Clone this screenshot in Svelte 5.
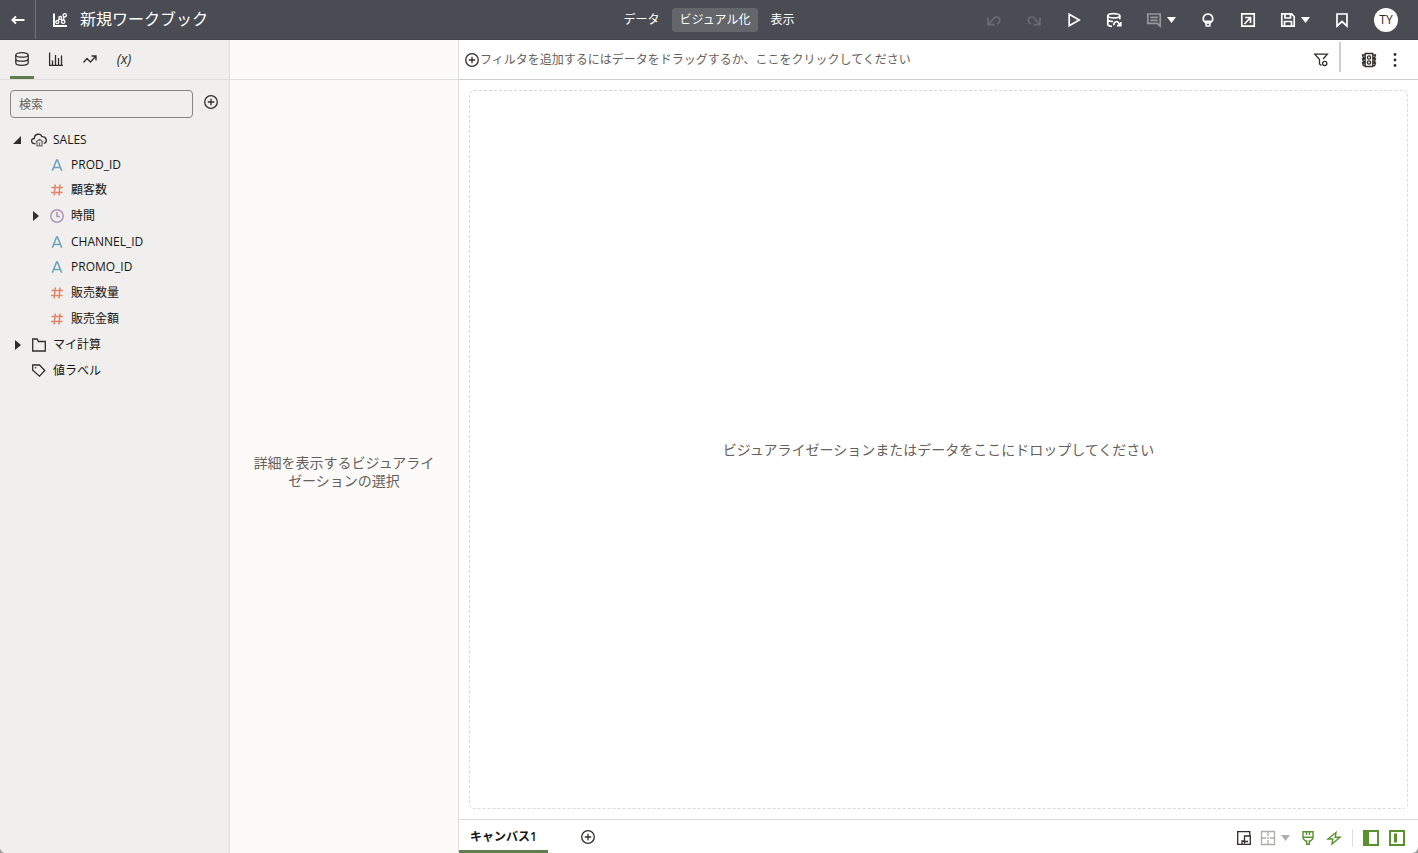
<script lang="ts">
  type Mode = "data" | "visualize" | "present";
  type Kind = "text" | "number" | "time";

  const modes: { id: Mode; label: string }[] = [
    { id: "data", label: "データ" },
    { id: "visualize", label: "ビジュアル化" },
    { id: "present", label: "表示" },
  ];

  const columns: { name: string; kind: Kind; expandable?: boolean }[] = [
    { name: "PROD_ID", kind: "text" },
    { name: "顧客数", kind: "number" },
    { name: "時間", kind: "time", expandable: true },
    { name: "CHANNEL_ID", kind: "text" },
    { name: "PROMO_ID", kind: "text" },
    { name: "販売数量", kind: "number" },
    { name: "販売金額", kind: "number" },
  ];

  const panels = [
    { id: "data", label: "データ" },
    { id: "charts", label: "ビジュアライゼーション" },
    { id: "analytics", label: "アナリティクス" },
    { id: "params", label: "パラメータ" },
  ];

  let mode = $state<Mode>("visualize");
  let panel = $state("data");
  let search = $state("");
  let salesOpen = $state(true);
</script>

{#snippet addIcon()}
  <svg class="icon" viewBox="0 0 16 16" aria-hidden="true">
    <circle cx="8" cy="8" r="6.3" />
    <path d="M8 4.8v6.4M4.8 8h6.4" />
  </svg>
{/snippet}

{#snippet caret()}
  <svg class="caret" viewBox="0 0 9 6" aria-hidden="true"><path d="M0 0h9L4.5 6z" /></svg>
{/snippet}

{#snippet kindIcon(kind: Kind)}
  <svg class="icon {kind}" viewBox="0 0 16 16" aria-hidden="true">
    {#if kind === "text"}
      <path d="M3.3 13.8 7.6 3h.8l4.3 10.800M4.900 10.500h6.200" />
    {:else if kind === "number"}
      <path d="M6.200 2.500 5.200 13.500M11 2.500 10 13.500M2.500 5.500h11.500M2 10.500h11.500" />
    {:else}
      <circle cx="8" cy="8" r="6.2" />
      <path d="M8 4v4.5h3" />
    {/if}
  </svg>
{/snippet}

<div class="app">
  <header class="topbar">
    <div class="start">
      <button class="back" type="button" aria-label="戻る">
        <svg class="icon" viewBox="0 0 16 16"><path class="heavy" d="M14.500 8H2.500M6 4.500 2.500 8 6 11.500" /></svg>
      </button>
      <svg class="icon" viewBox="0 0 16 16" aria-hidden="true">
        <path class="heavy" d="M2 1.500v12.500h13" />
        <path d="M6 8.800 7.300 7M9.300 7l.8.900M11.700 8V5" />
        <circle cx="5.300" cy="10" r="1.500" />
        <circle cx="8.200" cy="5.900" r="1.400" />
        <circle cx="11.200" cy="9.700" r="1.700" />
        <circle cx="12.700" cy="3.300" r="1.700" />
      </svg>
      <h1>新規ワークブック</h1>
    </div>

    <nav class="modes">
      {#each modes as m}
        <button type="button" class:active={mode === m.id} onclick={() => (mode = m.id)}>{m.label}</button>
      {/each}
    </nav>

    <div class="tools">
      <button type="button" disabled aria-label="元に戻す">
        <svg class="icon" viewBox="0 0 16 16"><path class="thick" d="M2 5.500v7.200h6.500M2.500 12.200 7.500 6.500c1.400-1.500 3.700-1.800 5.200-.5 1.800 1.600 1.500 4.200-1.700 6.300" /></svg>
      </button>
      <button type="button" disabled aria-label="やり直し">
        <svg class="icon" viewBox="0 0 16 16"><path class="thick" d="M14 5.500v7.200H7.500M13.500 12.200 8.500 6.500C7.100 5 4.800 4.700 3.300 6c-1.800 1.600-1.500 4.200 1.700 6.300" /></svg>
      </button>
      <button type="button" aria-label="プレビュー">
        <svg class="icon" viewBox="0 0 16 16"><path class="thick" d="M3.200 2.200v11.600L13.200 8z" /></svg>
      </button>
      <button type="button" aria-label="データのリフレッシュ">
        <svg class="icon" viewBox="0 0 16 16">
          <path class="thick" d="M1.800 3.700v8.500c0 1.200 1.800 2 4.200 2.100M13.800 3.700v3.500M1.800 7.800c1 1.500 3.200 1.800 5.200 1.500" />
          <ellipse class="thick" cx="7.800" cy="3.700" rx="6" ry="2.100" />
          <path class="thick" d="M8 13.200c-.8-3 3-4.700 4.600-2.300l1.200 2.400M14.800 10v3.700H11" />
        </svg>
      </button>
      <button class="menu" type="button" aria-label="ノート">
        <svg class="icon dim" viewBox="0 0 16 16"><path class="thick" d="M1.800 2h12.400v12l-3-2.700H1.800zM4.300 5.300h7.500M4.300 8.300h7.500" /></svg>
        {@render caret()}
      </button>
      <button type="button" aria-label="インサイト">
        <svg class="icon" viewBox="0 0 16 16"><path class="thick" d="M5.800 11 3.500 8.500C2.400 5 4.500 2 8 2s5.600 3 4.500 6.500L10.200 11zM4.500 9.300h7M6.200 11v3h3.600v-3" /></svg>
      </button>
      <button type="button" aria-label="エクスポート">
        <svg class="icon" viewBox="0 0 16 16"><path class="thick" d="M1.800 1.800h12.400v12.400H1.800zM5 5.500h5.500V11M10 6l-5.500 6" /></svg>
      </button>
      <button class="menu" type="button" aria-label="保存">
        <svg class="icon" viewBox="0 0 16 16"><path class="thick" d="M1.800 1.800h9.700l2.700 2.700v9.700H1.800zM5 2v4h5.500V2M4.500 14V9.500h7V14" /></svg>
        {@render caret()}
      </button>
      <button type="button" aria-label="ブックマーク">
        <svg class="icon" viewBox="0 0 16 16"><path class="thick" d="M3 2h10v12l-5-4.500L3 14z" /></svg>
      </button>
      <button class="avatar" type="button">TY</button>
    </div>
  </header>

  <div class="body">
    <aside class="data">
      <div class="panels">
        {#each panels as p}
          <button type="button" class:active={panel === p.id} aria-label={p.label} onclick={() => (panel = p.id)}>
            {#if p.id === "params"}
              <i>(x)</i>
            {:else}
              <svg class="icon" viewBox="0 0 16 16">
                {#if p.id === "data"}
                  <ellipse cx="8" cy="3.900" rx="6.200" ry="2.300" />
                  <path d="M1.800 3.900v8.200c0 1.200 2.500 2.200 6.200 2.200s6.200-1 6.200-2.200V3.900M1.800 8c0 1.200 2.500 2.200 6.200 2.200S14.200 9.200 14.200 8" />
                {:else if p.id === "charts"}
                  <path d="M1.600 1.500v12.900H15M4.500 14V9.500M7.500 14V4M10.500 14V7M13.500 14V4.500" />
                {:else}
                  <path d="M1.500 11.500 5 7.500l3.500 3.500 5-5.500M9.500 5h4.500v4.500" />
                {/if}
              </svg>
            {/if}
          </button>
        {/each}
      </div>

      <div class="search">
        <input type="text" placeholder="検索" aria-label="検索" bind:value={search} />
        <button type="button" aria-label="データの追加">{@render addIcon()}</button>
      </div>

      <ul class="tree">
        <li>
          <button class="row latin" type="button" onclick={() => (salesOpen = !salesOpen)}>
            <svg class="twisty" viewBox="0 0 10 10"><path d={salesOpen ? "M9 1v8H1z" : "M3 0l6 5-6 5z"} /></svg>
            <svg class="icon" viewBox="0 0 16 16">
              <path d="M4.500 11.700C-.8 11.500-.3 6.500 3.300 6.500 3.500 1.500 9.500.8 11 4.700c4.500-.2 6 5.500 1.800 6.800" />
              <path class="home" d="M4.800 10 8.500 7.300l3.700 2.700M6 9.500v4.300h5V9.500M8.500 10.500v3" />
            </svg>
            SALES
          </button>
          {#if salesOpen}
            <ul>
              {#each columns as c}
                <li>
                  <button class="row" class:latin={c.name === "PROD_ID" || c.name === "CHANNEL_ID"} type="button">
                    <svg class="twisty" viewBox="0 0 10 10">
                      {#if c.expandable}<path d="M3 0l6 5-6 5z" />{/if}
                    </svg>
                    {@render kindIcon(c.kind)}
                    {c.name}
                  </button>
                </li>
              {/each}
            </ul>
          {/if}
        </li>
        <li>
          <button class="row" type="button">
            <svg class="twisty" viewBox="0 0 10 10"><path d="M3 0l6 5-6 5z" /></svg>
            <svg class="icon" viewBox="0 0 16 16"><path d="M1.700 2h4.500l1.300 2.500h6.800V14H1.700z" /></svg>
            マイ計算
          </button>
        </li>
        <li>
          <button class="row" type="button">
            <svg class="twisty" viewBox="0 0 10 10"></svg>
            <svg class="icon" viewBox="0 0 16 16">
              <path d="M1.700 2h6.800l5.300 5.500-5.300 5.700-6.800-6z" />
              <circle class="dot" cx="4.600" cy="4.800" r="0.800" />
            </svg>
            値ラベル
          </button>
        </li>
      </ul>
    </aside>

    <section class="grammar">
      <div class="strip"></div>
      <p>詳細を表示するビジュアライゼーションの選択</p>
    </section>

    <main>
      <div class="filters">
        <button class="hint" type="button">
          {@render addIcon()}フィルタを追加するにはデータをドラッグするか、ここをクリックしてください
        </button>
        <button type="button" aria-label="フィルタの設定">
          <svg class="icon" viewBox="0 0 16 16">
            <path d="M8.500 13.500 6.500 12V7.500L1.800 2.200h12.500L10.200 7" />
            <circle cx="11.700" cy="11.500" r="2.100" />
          </svg>
        </button>
        <span class="divider"></span>
        <button type="button" aria-label="データ・アクション">
          <svg class="icon" viewBox="0 0 16 16">
            <path d="M4.200 1.500h7.600v13H4.200zM4 3H1.500l.8 2.500H4M4 7H1.500l.8 2.500H4M4 11H1.500l.8 2.500H4M12 3h2.500l-.8 2.500H12M12 7h2.500l-.8 2.500H12M12 11h2.500l-.8 2.500H12" />
            <circle cx="8" cy="5.500" r="1.600" />
            <circle cx="8" cy="10.500" r="1.600" />
          </svg>
        </button>
        <button type="button" aria-label="メニュー">
          <svg class="icon" viewBox="0 0 16 16">
            <g class="dot"><circle cx="8" cy="2.500" r="1.400" /><circle cx="8" cy="8" r="1.400" /><circle cx="8" cy="13.500" r="1.400" /></g>
          </svg>
        </button>
      </div>

      <div class="dropzone">ビジュアライゼーションまたはデータをここにドロップしてください</div>

      <footer>
        <button class="canvas" type="button">キャンバス1</button>
        <button class="add" type="button" aria-label="キャンバスの追加">{@render addIcon()}</button>
        <div class="settings">
          <button type="button" aria-label="レイアウト">
            <svg class="icon ink" viewBox="0 0 16 16"><path d="M6 14.300H1.700V1.700h12.100V6M6 14.300V11h2.500V6h5.800v8.300zM7.500 11.500H12M8.500 9.500v4" /></svg>
          </button>
          <button class="grid" type="button" disabled aria-label="グリッド">
            <svg class="icon" viewBox="0 0 16 16"><path d="M1.500 1.500h13v13h-13zM8 2v4M8 10v4M2 8h4M10 8h4M7 8h2" /></svg>
            {@render caret()}
          </button>
          <button type="button" aria-label="ブラシ">
            <svg class="icon" viewBox="0 0 16 16"><path class="brush" d="M3 1.800h10v6.700L10.500 11H9.300v3.300H6.700V11H5.500L3 8.500zM3 7.300h10M6.500 2v3M9.500 2v3" /></svg>
          </button>
          <button type="button" aria-label="自動適用">
            <svg class="icon" viewBox="0 0 16 16"><path class="brush" d="M10 2.500 2 9h4.800L6 14l8-6.700H9.200z" /></svg>
          </button>
          <span class="divider"></span>
          <button type="button" aria-label="データ・パネル">
            <svg class="icon" viewBox="0 0 16 16"><path class="pane" d="M1 1h14v14H1z" /><path class="fill" d="M1 1h5v14H1z" /></svg>
          </button>
          <button type="button" aria-label="文法パネル">
            <svg class="icon" viewBox="0 0 16 16"><path class="pane" d="M1 1h14v14H1z" /><path class="fill" d="M5 3.500h3v9H5z" /></svg>
          </button>
        </div>
      </footer>
    </main>
  </div>
</div>

<style>
  :global(body) {
    background: #9a9a9a;
  }

  .app {
    --ink: #312d2a;
    --muted: #66615c;
    --line: #dfdedc;
    --green: #5f7d4f;
    display: flex;
    flex-direction: column;
    min-height: 100vh;
    overflow: hidden;
    border-radius: 0 0 6px 6px;
    background: #fff;
    color: var(--ink);
    font-family: "Open Sans", "Noto Sans CJK JP", sans-serif;
    font-size: 12px;
    line-height: 18px;
  }

  button {
    display: flex;
    align-items: center;
    flex: none;
    padding: 0;
    border: 0;
    background: none;
    color: inherit;
    font: inherit;
    cursor: pointer;
  }

  h1,
  p,
  ul {
    margin: 0;
    padding: 0;
    list-style: none;
  }

  .icon {
    flex: none;
    width: 16px;
    height: 16px;
    fill: none;
    stroke: currentColor;
    stroke-width: 1.3;
  }

  .thick {
    stroke-width: 1.7;
  }

  .heavy {
    stroke-width: 2;
  }

  .brush {
    stroke-width: 1.4;
  }

  .dot,
  .fill {
    fill: currentColor;
    stroke: none;
  }

  .caret {
    width: 9px;
    height: 6px;
    fill: currentColor;
  }

  .topbar {
    display: grid;
    grid-template-columns: 1fr auto 1fr;
    box-sizing: border-box;
    height: 40px;
    border-bottom: 1px solid #43454c;
    background: #4a4c54;
    color: #fff;
  }

  .start,
  .modes,
  .tools {
    display: flex;
    align-items: center;
  }

  .back {
    justify-content: center;
    align-self: stretch;
    width: 36px;
    margin-right: 16px;
    border-right: 1px solid #72747a;
  }

  h1 {
    margin-left: 12px;
    padding-bottom: 2px;
    font-size: 16px;
    font-weight: 400;
    line-height: 24px;
  }

  .modes {
    gap: 4px;
  }

  .modes button {
    height: 24px;
    padding: 0 8px;
    border-radius: 3px;
  }

  .modes .active {
    background: #63666b;
  }

  .tools {
    justify-content: flex-end;
    gap: 24px;
    padding-right: 20px;
  }

  .tools button:disabled {
    color: #696b71;
  }

  .menu {
    gap: 5px;
  }

  .dim {
    color: #96979b;
  }

  .tools .avatar {
    justify-content: center;
    width: 24px;
    height: 24px;
    border-radius: 50%;
    background: #fff;
    color: var(--ink);
  }

  .body {
    display: flex;
    flex: 1;
  }

  .data,
  .grammar {
    display: flex;
    flex-direction: column;
    flex: none;
    box-sizing: border-box;
    width: 230px;
    border-right: 1px solid var(--line);
    background: #f0efed;
  }

  .grammar {
    width: 229px;
    background: #fcfbfa;
  }

  .panels,
  .strip,
  .filters {
    display: flex;
    box-sizing: border-box;
    height: 40px;
    border-bottom: 1px solid var(--line);
  }

  .panels {
    gap: 10px;
    padding-left: 10px;
  }

  .panels button {
    justify-content: center;
    width: 24px;
    padding-top: 1px;
    border-bottom: 3px solid transparent;
    font-size: 14px;
  }

  .panels .active {
    border-bottom-color: var(--green);
  }

  .search {
    display: flex;
    align-items: flex-start;
    gap: 10px;
    padding: 10px 10px 9px;
  }

  .search input {
    flex: 1;
    min-width: 0;
    box-sizing: border-box;
    height: 28px;
    padding: 0 8px;
    border: 1px solid #8b8580;
    border-radius: 4px;
    background: transparent;
    color: var(--ink);
    font: inherit;
  }

  .search input::placeholder {
    color: var(--muted);
  }

  .search button {
    margin-top: 4px;
  }

  .row {
    gap: 6px;
    width: 100%;
    height: 26px;
    padding-left: 12px;
    color: #161513;
    text-align: left;
  }

  .row.latin {
    height: 25px;
  }

  .tree ul .row {
    padding-left: 30px;
  }

  .row .icon {
    margin-left: 3px;
    color: var(--ink);
  }

  .twisty {
    flex: none;
    width: 10px;
    height: 10px;
    fill: var(--ink);
  }

  .row .text {
    color: #6da3bd;
    stroke-width: 1.6;
  }

  .row .number {
    color: #e0846c;
    stroke-width: 1.5;
  }

  .row .time {
    color: #ae93bd;
    stroke-width: 1.5;
  }

  .home {
    stroke: #77736f;
  }

  .grammar p {
    margin: auto;
    padding: 11px 20px 0;
    color: var(--muted);
    font-size: 14px;
    text-align: center;
  }

  main {
    display: flex;
    flex: 1;
    flex-direction: column;
    min-width: 0;
  }

  .filters {
    align-items: center;
    gap: 10px;
    padding-right: 15px;
    border-bottom-color: #d0cfcd;
  }

  .hint {
    flex: 1;
    padding-left: 5px;
    color: var(--muted);
  }

  .hint .icon {
    color: var(--ink);
  }

  .filters .divider {
    align-self: flex-start;
    width: 2px;
    height: 30px;
    margin: 2px 10px 0 0;
    background: #d0cfcd;
  }

  .dropzone {
    display: flex;
    flex: 1;
    align-items: center;
    justify-content: center;
    margin: 10px;
    border: 1px dashed #dad9d8;
    border-radius: 5px;
    color: var(--muted);
    font-size: 14px;
  }

  footer {
    display: flex;
    align-items: center;
    height: 33px;
    border-top: 1px solid var(--line);
  }

  .canvas {
    box-sizing: border-box;
    height: 100%;
    padding: 3px 11px 0;
    border-bottom: 3px solid var(--green);
    color: #161513;
    font-weight: 600;
  }

  .add {
    margin-left: 32px;
  }

  .settings {
    display: flex;
    align-items: center;
    gap: 10px;
    margin-left: auto;
    padding: 2px 13px 0 0;
    color: #5b9130;
  }

  .ink {
    color: var(--ink);
  }

  .grid {
    gap: 5px;
    margin-left: -2px;
    color: #b0aeac;
  }

  .settings .divider {
    width: 1px;
    height: 18px;
    background: var(--line);
  }

  .pane {
    stroke-width: 2;
  }
</style>
